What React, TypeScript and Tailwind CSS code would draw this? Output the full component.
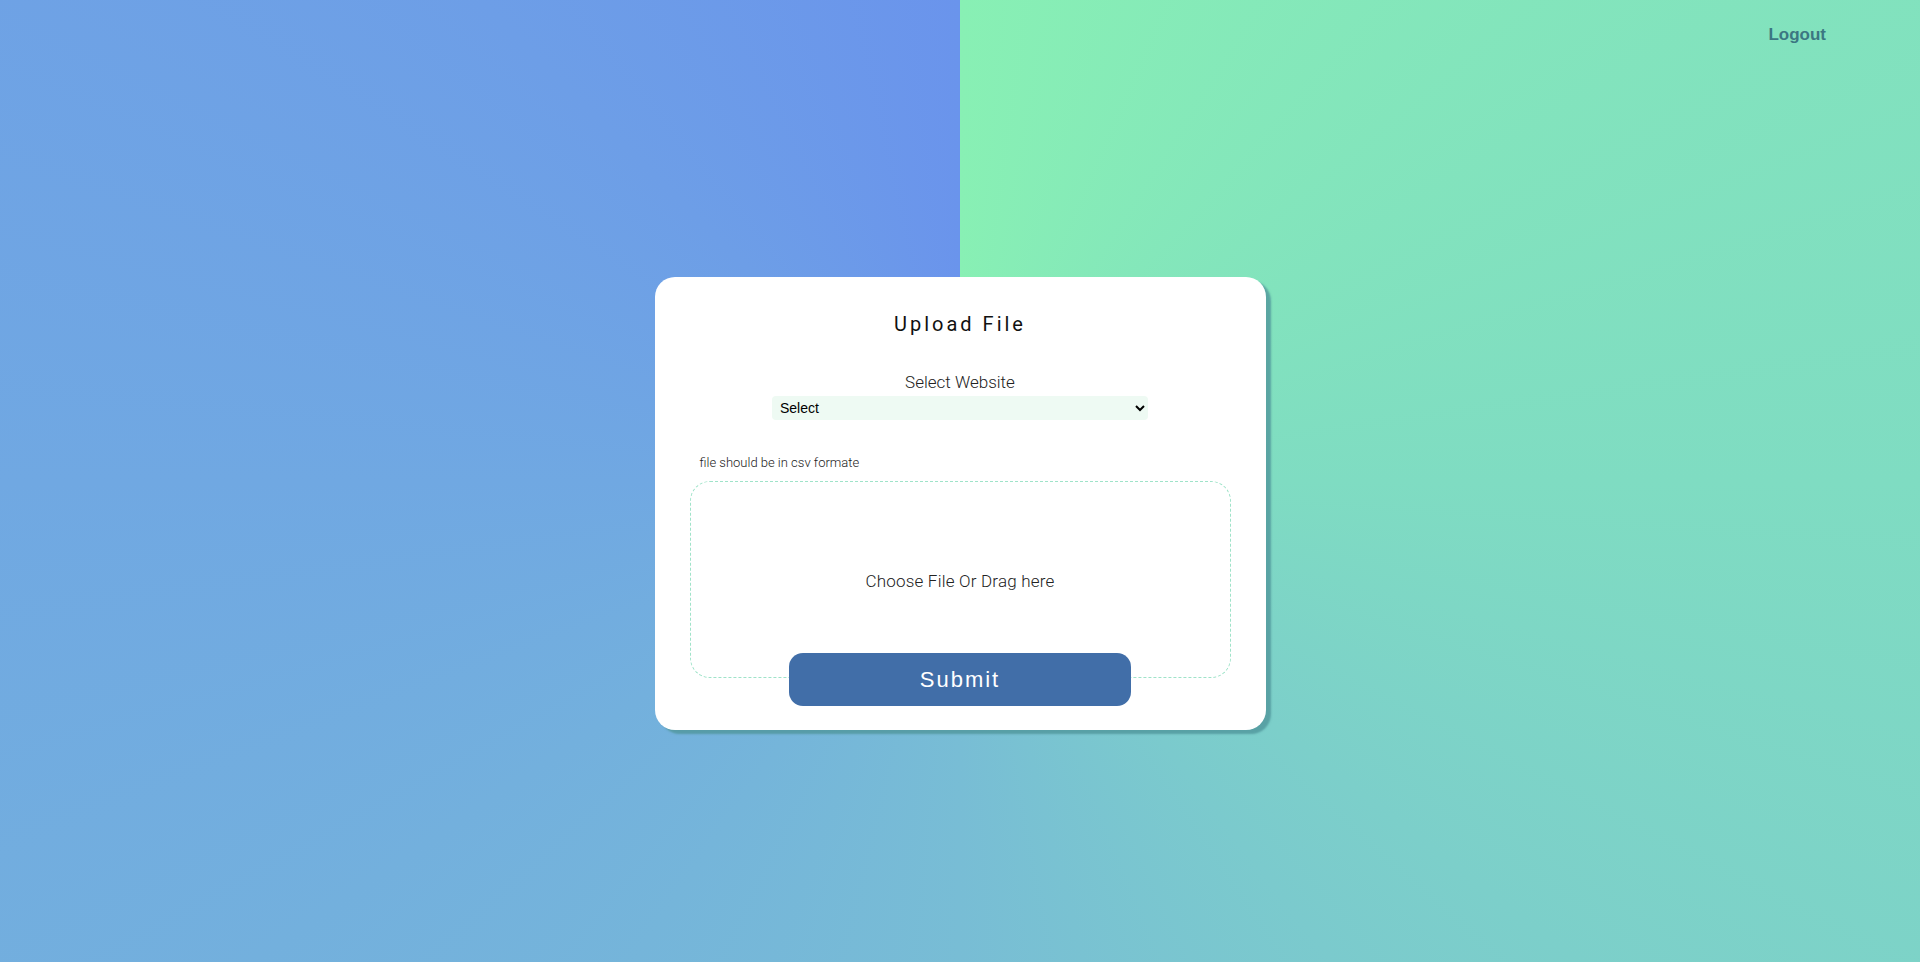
import { useState } from 'react';

export default function App() {
  const [site, setSite] = useState('');
  const [fileName, setFileName] = useState('');

  return (
    <div className="min-h-screen w-full bg-[conic-gradient(from_0deg_at_50%_50%,#88f0b4_0deg,#7fdcc2_90deg,#78bdd5_180deg,#70a8e2_270deg,#6a94ec_360deg)] font-['Roboto',sans-serif]">
      <div className="flex h-[69px] items-center justify-end pr-[94px]">
        <button className="font-['Liberation_Sans',Arial,sans-serif] text-[17px] font-bold text-[#3b7782]">Logout</button>
      </div>

      <div className="mx-auto mt-[208px] w-[611px] rounded-[20px] bg-white px-[35px] pt-[33px] pb-[24px] shadow-[5px_4px_2px_rgba(80,150,155,0.8)]">
        <h2 className="text-center text-[20px] leading-[28px] tracking-[3px] text-[#111]">Upload File</h2>

        <div className="mt-[32px] flex flex-col items-center">
          <label className="text-[17px] leading-[24px] font-light text-[#222]">Select Website</label>
          <select
            value={site}
            onChange={e => setSite(e.target.value)}
            className="mt-[2px] h-[24px] w-[376px] rounded-[4px] bg-[#eefaf3] pl-[4px] font-['Liberation_Sans',Arial,sans-serif] text-[14px] text-black outline-none"
          >
            <option value="">Select</option>
            <option value="site1">Website 1</option>
            <option value="site2">Website 2</option>
          </select>
        </div>

        <p className="mt-[35px] pl-[10px] text-[13px] leading-[16px] font-light text-[#222]">file should be in csv formate</p>

        <label className="mt-[10px] flex h-[197px] cursor-pointer items-center justify-center rounded-[20px] border border-dashed border-[#9fe3c9] pt-[5px]">
          <input type="file" accept=".csv" className="hidden" onChange={e => setFileName(e.target.files?.[0]?.name ?? '')} />
          <span className="text-[17px] tracking-[0.2px] font-light text-[#222]">{fileName || 'Choose File Or Drag here'}</span>
        </label>

        <div className="-mt-[25px] flex justify-center">
          <button className="h-[53px] w-[342px] rounded-[14px] bg-[#416ea8] font-['Liberation_Sans',Arial,sans-serif] text-[22px] tracking-[2px] text-white">
            Submit
          </button>
        </div>
      </div>
    </div>
  );
}
